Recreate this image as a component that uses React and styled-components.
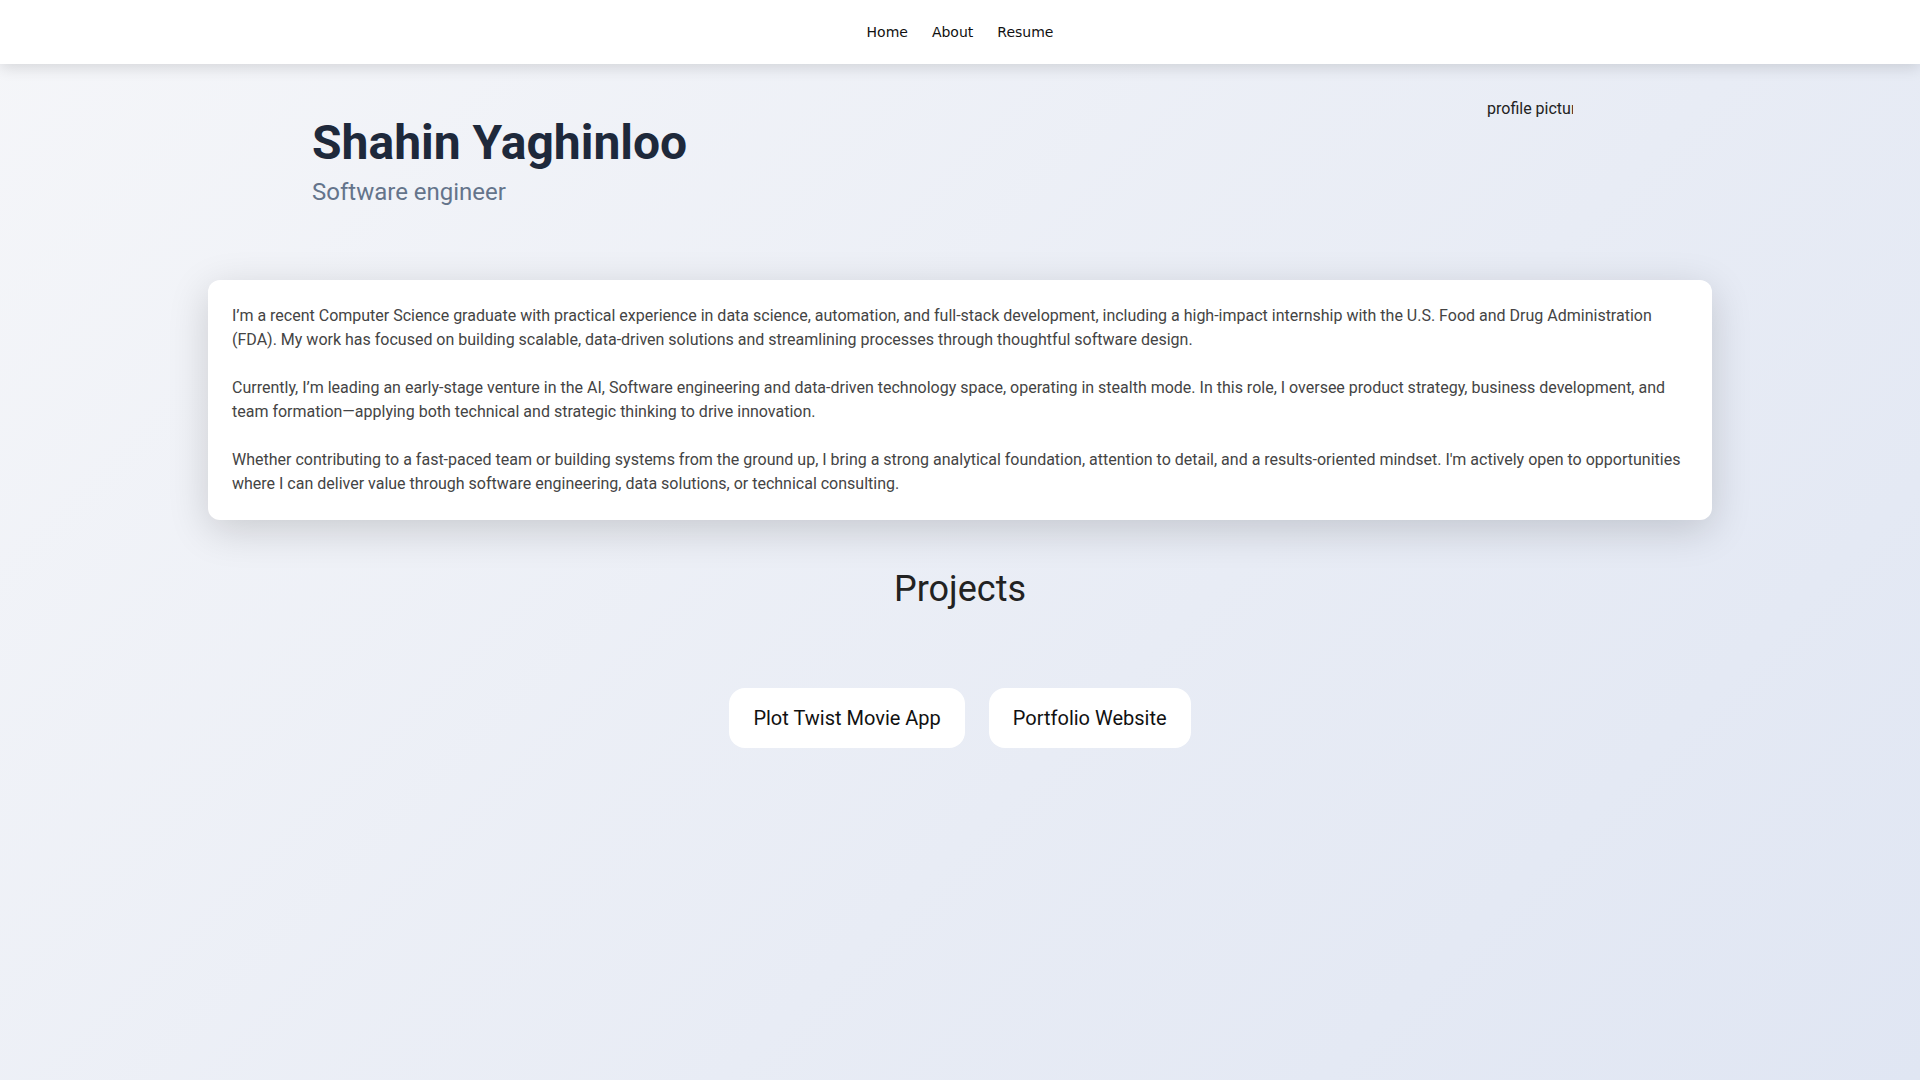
import styled, { createGlobalStyle } from 'styled-components';

const GlobalStyle = createGlobalStyle`
	html, body {
		margin: 0;
		padding: 0;
	}

	body {
		min-height: 100vh;
		font-family: Roboto, 'Liberation Sans', sans-serif;
		background: linear-gradient(135deg, #f5f6f9 0%, #e8ecf5 60%, #e0e6f3 100%);
		background-attachment: fixed;
	}
`;

const paragraphs = [
	'I’m a recent Computer Science graduate with practical experience in data science, automation, and full-stack development, including a high-impact internship with the U.S. Food and Drug Administration (FDA). My work has focused on building scalable, data-driven solutions and streamlining processes through thoughtful software design.',
	'Currently, I’m leading an early-stage venture in the AI, Software engineering and data-driven technology space, operating in stealth mode. In this role, I oversee product strategy, business development, and team formation—applying both technical and strategic thinking to drive innovation.',
	"Whether contributing to a fast-paced team or building systems from the ground up, I bring a strong analytical foundation, attention to detail, and a results-oriented mindset. I'm actively open to opportunities where I can deliver value through software engineering, data solutions, or technical consulting.",
];

const projects = ['Plot Twist Movie App', 'Portfolio Website'];

const App = () => {
	return (
		<>
			<GlobalStyle />
			<Nav>
				<NavLink href="#">Home</NavLink>
				<NavLink href="#">About</NavLink>
				<NavLink href="#">Resume</NavLink>
			</Nav>

			<Header>
				<Intro>
					<Name>Shahin Yaghinloo</Name>
					<Role>Software engineer</Role>
				</Intro>
				<Avatar role="img" aria-label="profile picture">
					profile picture
				</Avatar>
			</Header>

			<AboutCard>
				{paragraphs.map((text, i) => (
					<Paragraph key={i}>{text}</Paragraph>
				))}
			</AboutCard>

			<Projects>
				<SectionTitle>Projects</SectionTitle>
				<ProjectList>
					{projects.map((name) => (
						<ProjectButton key={name}>{name}</ProjectButton>
					))}
				</ProjectList>
			</Projects>
		</>
	);
};

const Nav = styled.nav`
	position: sticky;
	top: 0;
	z-index: 10;
	height: 64px;
	display: flex;
	justify-content: center;
	align-items: center;
	gap: 24px;
	background: #fff;
	box-shadow: 0 4px 14px rgba(0, 0, 0, 0.12);
`;

const NavLink = styled.a`
	font-family: 'DejaVu Sans', sans-serif;
	font-size: 14px;
	color: #111;
	text-decoration: none;
`;

const Header = styled.header`
	display: flex;
	justify-content: space-between;
	align-items: flex-start;
	padding: 35px 347px 0 312px;
`;

const Intro = styled.div`
	padding-top: 15px;
`;

const Name = styled.h1`
	margin: 0;
	font-size: 48px;
	font-weight: 700;
	color: #1e293b;
`;

const Role = styled.p`
	margin: 7px 0 0;
	font-size: 24px;
	color: #64748b;
`;

const Avatar = styled.div`
	width: 86px;
	height: 120px;
	overflow: hidden;
	white-space: nowrap;
	font-size: 16px;
	line-height: 19px;
	color: #222;
`;

const AboutCard = styled.section`
	margin: 61px 208px 0;
	padding: 24px;
	background: #fff;
	border-radius: 12px;
	box-shadow: 0 10px 40px rgba(0, 0, 0, 0.16);
`;

const Paragraph = styled.p`
	margin: 0 0 24px;
	font-size: 16px;
	line-height: 24px;
	color: #444;

	&:last-child {
		margin-bottom: 0;
	}
`;

const Projects = styled.section`
	display: flex;
	flex-direction: column;
	align-items: center;
	padding-top: 48px;
`;

const SectionTitle = styled.h2`
	margin: 0;
	font-size: 36px;
	font-weight: 400;
	color: #222;
`;

const ProjectList = styled.div`
	display: flex;
	gap: 24px;
	margin-top: 78px;
`;

const ProjectButton = styled.button`
	height: 60px;
	padding: 0 24px;
	border: none;
	border-radius: 16px;
	background: #fff;
	font-family: Roboto, 'Liberation Sans', sans-serif;
	font-size: 20px;
	color: #111;
	cursor: pointer;
`;

export default App;
